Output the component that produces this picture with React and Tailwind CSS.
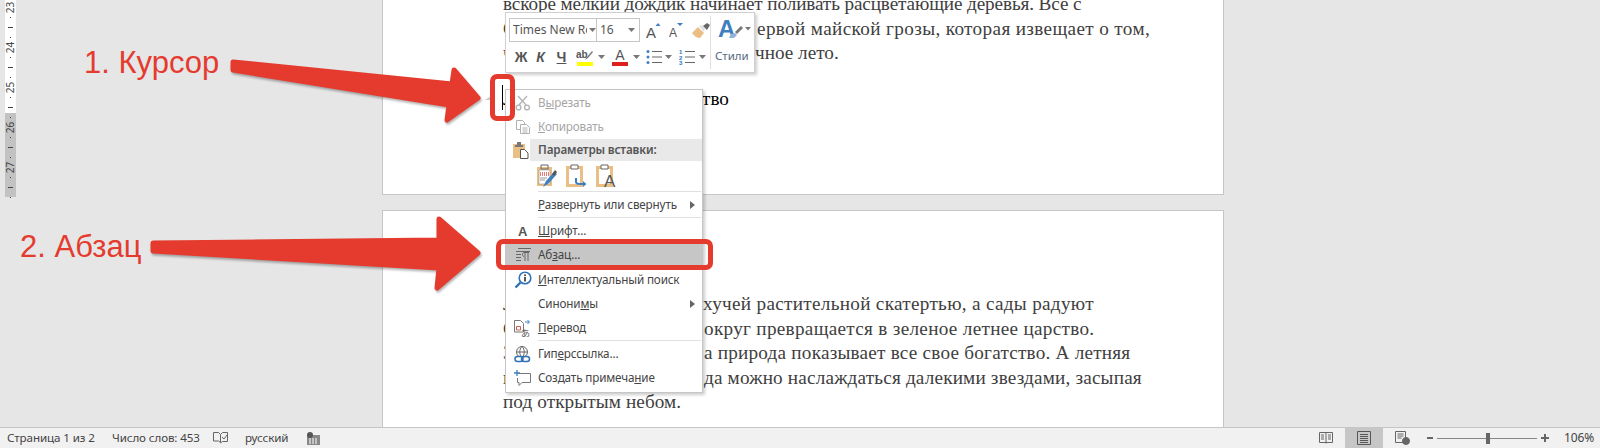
import React from "react";

const UI = "font-['Noto_Sans',sans-serif]";
const RED = "#e53b2e";

const Caret = ({ className = "" }) => (
  <svg width="7" height="4" viewBox="0 0 7 4" className={className}><path d="M0 0h7L3.5 4z" fill="#777" /></svg>
);

const Arrow = () => (
  <svg width="5" height="8" viewBox="0 0 5 8" className="ml-auto mr-[7px]"><path d="M0 0l5 4-5 4z" fill="#666" /></svg>
);

function Scissors() {
  return (
    <svg width="16" height="16" viewBox="0 0 16 16" fill="none" stroke="#b4b4b4" strokeWidth="1.4">
      <path d="M3 1l8 9M12 1L4 10" />
      <circle cx="3.5" cy="12.5" r="2.4" />
      <circle cx="12" cy="12.5" r="2.4" />
    </svg>
  );
}
function CopyIcon() {
  return (
    <svg width="16" height="16" viewBox="0 0 16 16" fill="#fff" stroke="#b0b0b0">
      <path d="M1.5 1.5h6l2 2v7h-8z" />
      <path d="M5.5 5.5h6l3 3v6h-9z" />
      <path d="M7.5 9h5M7.5 11h5M7.5 13h5" />
    </svg>
  );
}
function PasteIcon() {
  return (
    <svg width="16" height="18" viewBox="0 0 16 18">
      <path d="M0 3h12v14H0z" fill="#eabf85" />
      <path d="M4 1h4v3h2v2H2V4h2z" fill="#777" />
      <path d="M7.5 8.5h4l3.5 3.5v5.500H7.500z" fill="#fff" stroke="#555" />
    </svg>
  );
}
function PasteKeep() {
  return (
    <svg width="22" height="24" viewBox="0 0 22 24">
      <path d="M1 3h15v19H1z" fill="#eabf85" />
      <path d="M5 1h7v4H5z" fill="none" stroke="#666" />
      <path d="M3 6h11v14H3z" fill="#fff" stroke="#999" strokeWidth=".6" />
      <path d="M4 9h9M4 11h9" stroke="#e0524a" strokeDasharray="1 1" strokeWidth="1.400" />
      <path d="M4 14h7M4 16h5" stroke="#999" />
      <path d="M7 23l3-6 8-9 3 2-8 9z" fill="#3f7fc0" />
      <path d="M16 10l3-4 2 2-3 4z" fill="#555" />
    </svg>
  );
}
function PasteMerge() {
  return (
    <svg width="22" height="24" viewBox="0 0 22 24" fill="none">
      <path d="M1.500 3.500h14v18h-14z" stroke="#eabf85" strokeWidth="3" />
      <path d="M5 1h7v4H5z" stroke="#666" fill="#fff" />
      <path d="M3 6h11v14H3z" fill="#fff" />
      <path d="M10 14v4c0 2 2 2 4 2h5" stroke="#3f7fc0" strokeWidth="2" />
      <path d="M17 17l3.500 3-3.500 3z" fill="#3f7fc0" />
    </svg>
  );
}
function PasteText() {
  return (
    <svg width="22" height="24" viewBox="0 0 22 24" fill="none">
      <path d="M1.500 3.500h14v18h-14z" stroke="#eabf85" strokeWidth="3" />
      <path d="M5 1h7v4H5z" stroke="#666" fill="#fff" />
      <text x="8" y="23" fontSize="17" fontFamily="Liberation Sans" fill="#555">A</text>
    </svg>
  );
}
function ParaIcon() {
  return (
    <svg width="16" height="14" viewBox="0 0 16 14" fill="none" stroke="#666">
      <path d="M3 .5h13M1 3.500h14M1 6.500h5M1 9.500h5M1 12.500h5" />
      <path d="M9 4.500c-2 0-2 4 0 4M10 4v9M13 4v9M9 4.500h5" />
    </svg>
  );
}
function SearchIcon() {
  return (
    <svg width="18" height="18" viewBox="0 0 18 18" fill="none">
      <circle cx="11" cy="7" r="5.800" stroke="#2f73b5" strokeWidth="1.600" />
      <path d="M6.500 11.500L1.500 16.500" stroke="#2f73b5" strokeWidth="2.400" />
      <circle cx="11" cy="4.200" r="1" fill="#444" />
      <path d="M11 6v4.500" stroke="#444" strokeWidth="1.800" />
    </svg>
  );
}
function TranslateIcon() {
  return (
    <svg width="17" height="17" viewBox="0 0 17 17" fill="none">
      <path d="M.5.500h6l3 3v8.500h-9z" fill="#fff" stroke="#777" />
      <path d="M2.500 6.500h4v3.500h-4z" stroke="#c0392b" strokeWidth=".8" />
      <path d="M11 2h4M13.500 0l2 2-2 2" stroke="#3f7fc0" />
      <text x="7" y="16.500" fontSize="9" fontFamily="Noto Sans CJK JP" fill="#555">あ</text>
    </svg>
  );
}
function LinkIcon() {
  return (
    <svg width="17" height="17" viewBox="0 0 17 17" fill="none">
      <circle cx="8" cy="6" r="5.500" stroke="#666" />
      <path d="M2.500 6h11M8 .500c-3 3-3 8 0 11M8 .500c3 3 3 8 0 11" stroke="#666" />
      <rect x="1" y="10.500" width="8" height="5" rx="2.500" fill="#fff" stroke="#2f73b5" strokeWidth="1.500" />
      <rect x="7.500" y="10.500" width="8" height="5" rx="2.500" fill="none" stroke="#2f73b5" strokeWidth="1.500" />
    </svg>
  );
}
function CommentIcon() {
  return (
    <svg width="17" height="16" viewBox="0 0 17 16" fill="none">
      <path d="M4.500 3.500h12v9H8l-3 3v-3H3.500V8" stroke="#777" fill="#fff" />
      <path d="M3 0v6M0 3h6" stroke="#3f7fc0" strokeWidth="1.300" />
    </svg>
  );
}

function MenuRow({ icon, active, disabled, arrow, children }) {
  return (
    <div className={`flex items-center h-[24px] ${active ? "bg-[#c6c6c6]" : ""} ${disabled ? "text-[#a6a6a6]" : "text-[#444]"}`}>
      <div className="w-[32px] shrink-0 flex justify-center pl-[1px]">{icon}</div>
      <span>{children}</span>
      {arrow && <Arrow />}
    </div>
  );
}

const Sep = () => <div className="h-px ml-[32px] mr-[1px] bg-[#e0e0e0]" />;

function ContextMenu() {
  return (
    <div className={`absolute left-[505px] top-[89px] w-[198px] h-[304px] py-[1px] bg-white border border-[#c6c6c6] shadow-[2px_2px_3px_rgba(0,0,0,0.2)] text-[11.7px] leading-none tracking-[-0.15px] ${UI}`}>
      <MenuRow icon={<Scissors />} disabled>В<span className="underline">ы</span>резать</MenuRow>
      <MenuRow icon={<CopyIcon />} disabled><span className="underline">К</span>опировать</MenuRow>
      <div className="flex items-center h-[22px]">
        <div className="w-[24px] shrink-0 flex justify-end pr-[1px]"><PasteIcon /></div>
        <div className="flex-1 h-full flex items-center pl-[8px] bg-[#e9e9e9] font-semibold text-[#555]">Параметры вставки:</div>
      </div>
      <div className="flex items-center h-[30px] pl-[30px] gap-[8px]">
        <PasteKeep /><PasteMerge /><PasteText />
      </div>
      <Sep />
      <div className="h-px" />
      <MenuRow arrow><span className="underline">Р</span>азвернуть или свернуть</MenuRow>
      <Sep />
      <div className="h-px" />
      <MenuRow icon={<span className="font-['Liberation_Sans',sans-serif] font-bold text-[13px] text-[#555]">A</span>}><span className="underline">Ш</span>рифт...</MenuRow>
      <MenuRow icon={<ParaIcon />} active>Аб<span className="underline">з</span>ац...</MenuRow>
      <div className="h-px" />
      <MenuRow icon={<SearchIcon />}><span className="underline">И</span>нтеллектуальный поиск</MenuRow>
      <MenuRow arrow>Синони<span className="underline">м</span>ы</MenuRow>
      <MenuRow icon={<TranslateIcon />}><span className="underline">П</span>еревод</MenuRow>
      <Sep />
      <div className="h-px" />
      <MenuRow icon={<LinkIcon />}>Гип<span className="underline">е</span>рссылка...</MenuRow>
      <MenuRow icon={<CommentIcon />}>Создать примеча<span className="underline">н</span>ие</MenuRow>
    </div>
  );
}

function ListBullets() {
  return (
    <svg width="16" height="16" viewBox="0 0 16 16">
      <path d="M6 2.500h10M6 8h10M6 13.500h10" stroke="#666" />
      <circle cx="2" cy="2.500" r="1.500" fill="#3f7fc0" /><circle cx="2" cy="8" r="1.500" fill="#3f7fc0" /><circle cx="2" cy="13.500" r="1.500" fill="#3f7fc0" />
    </svg>
  );
}
function ListNumbers() {
  return (
    <svg width="16" height="16" viewBox="0 0 16 16">
      <path d="M6 2.500h10M6 8h10M6 13.500h10" stroke="#666" />
      <text x="0" y="5" fontSize="6" fontFamily="Liberation Sans" fill="#2f73b5">1</text>
      <text x="0" y="10.500" fontSize="6" fontFamily="Liberation Sans" fill="#2f73b5">2</text>
      <text x="0" y="16" fontSize="6" fontFamily="Liberation Sans" fill="#2f73b5">3</text>
    </svg>
  );
}
function Brush() {
  return (
    <svg width="18" height="15" viewBox="0 0 18 15">
      <path d="M0 10l6-6 6 6-4 5c-3 0-6-2-8-5z" fill="#eabf85" />
      <path d="M7 3l3-1 3 4-1 3z" fill="#e0e0e0" />
      <path d="M11 3l4-3 3 2-3 5z" fill="#666" />
    </svg>
  );
}
function StylesIcon() {
  return (
    <svg width="34" height="20" viewBox="0 0 34 20">
      <text x="0" y="17.500" fontSize="24" fontWeight="bold" fontFamily="Liberation Sans" fill="#3f7fc0">A</text>
      <path d="M11 19l2-4 4-1 2 2-3 3z" fill="#8fb4dc" />
      <path d="M17 13l6-6 2 2-6 6z" fill="#777" />
      <path d="M27 8h6l-3 3.500z" fill="#777" />
    </svg>
  );
}
function GrowShrink({ up }) {
  return (
    <svg width="15" height="15" viewBox="0 0 15 15">
      <text x="0" y={up ? 15 : 14} fontSize={up ? 15 : 12} fontFamily="Liberation Sans" fill="#555">A</text>
      <path d={up ? "M9.500 3l2.500-3 2.500 3z" : "M8 0h6l-3 3z"} fill="#3f7fc0" />
    </svg>
  );
}
function Highlight() {
  return (
    <div className="w-[17px] flex flex-col items-center">
      <svg width="17" height="13" viewBox="0 0 17 13">
        <text x="0" y="9" fontSize="10" fontFamily="Liberation Sans" fill="#555">ab</text>
        <path d="M9 11l2-3 5-6 1 1-5 6z" fill="#777" />
      </svg>
      <div className="w-[16px] h-[4px] bg-[#ffff00]" />
    </div>
  );
}

function MiniToolbar() {
  return (
    <div className={`absolute left-[505px] top-[12px] w-[250px] h-[61px] bg-white border border-[#d0d0d0] shadow-[2px_2px_3px_rgba(0,0,0,0.2)] flex text-[#555] ${UI}`}>
      <div className="w-[204px] shrink-0 pl-[3px] pt-[5px]">
        <div className="flex items-center h-[24px]">
          <div className="w-[90px] h-full border border-[#c6c6c6] flex items-center pl-[3px] text-[12px]">
            <span className="w-[74px] overflow-hidden whitespace-nowrap">Times New Roman</span>
            <Caret className="ml-[2px]" />
          </div>
          <div className="w-[46px] h-full -ml-px border border-[#c6c6c6] flex items-center pl-[3px] text-[12px]">
            16<Caret className="ml-auto mr-[4px]" />
          </div>
          <div className="ml-[6px] flex items-center gap-[8px]">
            <GrowShrink up /><GrowShrink />
            <Brush />
          </div>
        </div>
        <div className="flex items-center h-[26px] mt-[2px] text-[14px] font-['Liberation_Sans',sans-serif] font-bold">
          <span className="w-[21px] text-center pl-[3px]">Ж</span>
          <span className="w-[21px] text-center italic">К</span>
          <span className="w-[21px] text-center underline">Ч</span>
          <div className="ml-[4px]"><Highlight /></div>
          <Caret className="ml-[5px]" />
          <div className="ml-[7px] w-[16px] flex flex-col items-center leading-none">
            <span className="text-[14px] font-normal">A</span>
            <div className="w-[16px] h-[4px] bg-[#e0201c]" />
          </div>
          <Caret className="ml-[5px]" />
          <div className="ml-[6px]"><ListBullets /></div>
          <Caret className="ml-[3px]" />
          <div className="ml-[7px]"><ListNumbers /></div>
          <Caret className="ml-[4px]" />
        </div>
      </div>
      <div className="my-[3px] w-px bg-[#e0e0e0]" />
      <div className="flex-1 flex flex-col pt-[6px] pl-[7px]">
        <StylesIcon />
        <span className="mt-[11px] -ml-[3px] text-[11.5px] leading-none text-[#566a82]">Стили</span>
      </div>
    </div>
  );
}

function Ruler() {
  const marks = [23, 24, 25, 26, 27];
  return (
    <div className="ml-[5px] w-[11px] h-[197px] pt-[2px] shrink-0 bg-[linear-gradient(#fff_113px,#c2c2c2_113px)] flex flex-col items-center font-['Noto_Sans',sans-serif] text-[10px] text-[#444]">
      {marks.map((m) => (
        <div key={m} className="h-[40px] shrink-0 flex flex-col items-center">
          <div className="h-[10px] flex items-center justify-center"><span className="-rotate-90">{m}</span></div>
          <div className="h-[10px] flex items-center"><div className="w-px h-px bg-[#444]" /></div>
          <div className="h-[10px] flex items-center"><div className="w-[5px] h-px bg-[#444]" /></div>
          <div className="h-[10px] flex items-center"><div className="w-px h-px bg-[#444]" /></div>
        </div>
      ))}
    </div>
  );
}

function Line({ hidden, w, t = "", children }) {
  return (
    <div className="whitespace-nowrap">
      {hidden && <span className={`inline-block align-bottom ${w}`}>{hidden}</span>}
      <span className={t}>{children}</span>
    </div>
  );
}

function Overlay() {
  return (
    <svg className="absolute inset-0 pointer-events-none" width="1600" height="448" viewBox="0 0 1600 448">
      <path d="M485 100l6-4v4z" fill="#c8c8c8" />
      <path d="M502.500 85v25" stroke="#000" />
      <g fill={RED} stroke={RED} strokeWidth="5" strokeLinejoin="round" style={{ filter: "drop-shadow(1px 2px 1px rgba(0,0,0,0.3))" }}>
        <path d="M233 62L452 84 454 70 478 98 447 120 449 105 233 70z" />
        <path d="M153 243L439 240 439 219 478 253 437 288 439 268 153 251z" />
      </g>
    </svg>
  );
}

export default function App() {
  return (
    <div className="relative w-[1600px] h-[448px] overflow-hidden flex flex-col bg-[#e6e6e6]">
      <div className="flex-1 flex min-h-0">
        <Ruler />
        <div className="ml-[366px] w-[842px] flex flex-col gap-[15px] font-['Liberation_Serif',serif] text-[19.2px] leading-[24.5px] text-[#404040]">
          <div className="h-[195px] shrink-0 bg-white border-x border-b border-[#c6c6c6] overflow-hidden pl-[120px]">
            <div className="-mt-[8px]">
              <Line t="tracking-[-0.12px]">вскоре мелкий дождик начинает поливать расцветающие деревья. Все с</Line>
              <Line hidden="Слышны первые раскаты п" w="w-[254px]" t="tracking-[0.36px]">ервой майской грозы, которая извещает о том,</Line>
              <Line hidden="что уже совсем скоро солне" w="w-[252px]">чное лето.</Line>
              <div className="h-[21px]" />
              <div className="text-black"><Line hidden="Летнее богатс" w="w-[199px]">тво</Line></div>
            </div>
          </div>
          <div className="flex-1 min-h-0 bg-white border-x border-t border-[#c6c6c6] overflow-hidden pl-[120px] pt-[81px]">
            <Line hidden="Луга покрыты па" w="w-[200px]" t="tracking-[0.3px]">хучей растительной скатертью, а сады радуют</Line>
            <Line hidden="Сады цветут, и всё в" w="w-[201px]" t="tracking-[0.3px]">округ превращается в зеленое летнее царство.</Line>
            <Line hidden="Здесь вся эт" w="w-[201px]" t="tracking-[0.22px]">а природа показывает все свое богатство. А летняя</Line>
            <Line hidden="ночь прекрасна, ко" w="w-[201px]" t="tracking-[0.18px]">да можно наслаждаться далекими звездами, засыпая</Line>
            <Line t="tracking-[0.1px]">под открытым небом.</Line>
          </div>
        </div>
      </div>
      <div className={`h-[21px] shrink-0 bg-[#f1f1f1] border-t border-[#c6c6c6] flex items-center text-[11.6px] tracking-[-0.1px] text-[#444] ${UI}`}>
        <span className="ml-[7px] w-[105px]">Страница 1 из 2</span>
        <span className="w-[101px]">Число слов: 453</span>
        <svg width="15" height="13" viewBox="0 0 15 13" fill="none" stroke="#666"><path d="M.5.500h5l2 2v8l-2-1.500h-5zM7.500 2.500l2-2h5v9h-5l-2 1.500" /><path d="M9 5l2 2 3-4" /></svg>
        <span className="ml-[17px] w-[62px]">русский</span>
        <svg width="13" height="13" viewBox="0 0 13 13"><rect x="0" y="3" width="13" height="10" fill="#888" /><circle cx="3" cy="3" r="3" fill="#555" /><path d="M2 7h9M2 9h9M2 11h9" stroke="#fff" strokeDasharray="2 1" /></svg>
        <div className="ml-auto flex items-center h-full">
          <svg width="14" height="12" viewBox="0 0 14 12" fill="none" stroke="#666"><path d="M.5.500h13v10H.5zM7 .500v11M2 3h3M2 5h3M2 7h3M9 3h3M9 5h3M9 7h3" /></svg>
          <div className="ml-[12px] w-[38px] h-full bg-[#c6c6c6] flex items-center justify-center">
            <svg width="14" height="14" viewBox="0 0 14 14" fill="none" stroke="#555"><path d="M.5.500h13v13H.5zM3 3.500h8M3 5.500h8M3 7.500h8M3 9.500h8M3 11.500h8" /></svg>
          </div>
          <svg className="ml-[12px]" width="15" height="14" viewBox="0 0 15 14" fill="none" stroke="#666"><path d="M.5.500h10v11H.5zM2.500 3h6M2.500 5h6M2.500 7h4" /><circle cx="11" cy="10" r="3.500" fill="#666" /></svg>
          <div className="ml-[17px] w-[6px] h-[2px] bg-[#666]" />
          <div className="ml-[4px] w-[100px] h-px bg-[#888] flex items-center">
            <div className="ml-[49px] w-[4px] h-[11px] shrink-0 bg-[#666]" />
          </div>
          <span className="ml-[4px] w-[8px] h-[8px] flex items-center justify-center relative">
            <span className="w-[8px] h-[2px] bg-[#666]" />
            <span className="absolute left-[3px] top-0 w-[2px] h-[8px] bg-[#666]" />
          </span>
          <span className="ml-[15px] mr-[9px] w-[27px] text-[12px]">106%</span>
        </div>
      </div>

      <MiniToolbar />
      <ContextMenu />
      <Overlay />
      <div className="absolute left-[490px] top-[74px] w-[25px] h-[47px] border-[5px] rounded-[7px] border-[#e53b2e]" />
      <div className="absolute left-[496px] top-[239px] w-[217px] h-[31px] border-[5px] rounded-[7px] border-[#e53b2e]" />
      <span className="absolute left-[84px] top-[45px] font-['Liberation_Sans',sans-serif] text-[31px] leading-[36px] text-[#e53b2e]">1. Курсор</span>
      <span className="absolute left-[20px] top-[229px] font-['Liberation_Sans',sans-serif] text-[31px] leading-[36px] text-[#e53b2e]">2. Абзац</span>
    </div>
  );
}
